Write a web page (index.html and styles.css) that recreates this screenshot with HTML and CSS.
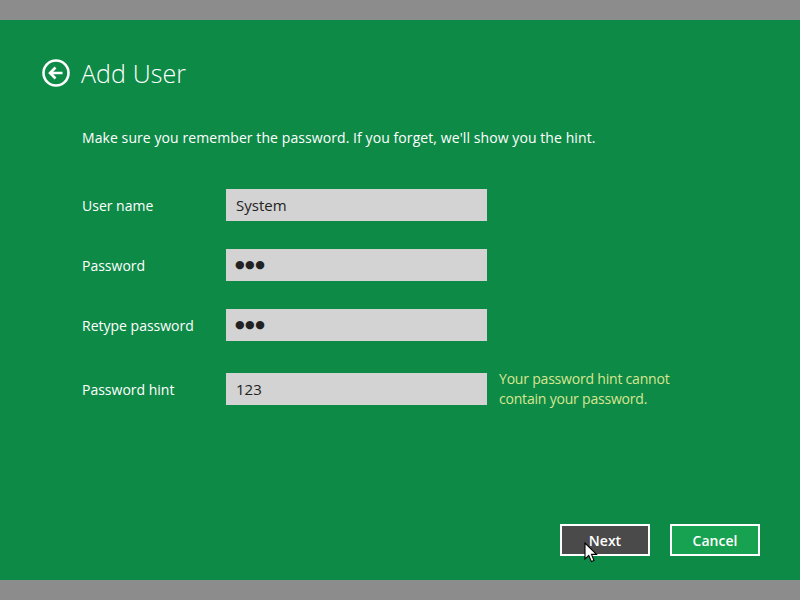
FILE: index.html
```html
<!DOCTYPE html>
<html>
<head>
<meta charset="utf-8">
<link rel="stylesheet" href="styles.css">
</head>
<body>
<div class="topbar"></div>
<main class="panel">
  <header class="title-row">
    <svg class="back" width="30" height="30" viewBox="0 0 30 30">
      <circle cx="15" cy="15" r="12.5" fill="none" stroke="#fff" stroke-width="2.6"/>
      <path d="M21.5 15 H9.5 M14.5 9.5 L9 15 L14.5 20.5" fill="none" stroke="#fff" stroke-width="2.6" stroke-linecap="butt" stroke-linejoin="miter"/>
    </svg>
    <h1 class="title">Add User</h1>
  </header>
  <p class="intro">Make sure you remember the password. If you forget, we'll show you the hint.</p>
  <div class="form">
    <div class="row">
      <label class="label">User name</label>
      <div class="field">System</div>
    </div>
    <div class="row">
      <label class="label">Password</label>
      <div class="field dots">●●●</div>
    </div>
    <div class="row">
      <label class="label">Retype password</label>
      <div class="field dots">●●●</div>
    </div>
    <div class="row row-hint">
      <label class="label">Password hint</label>
      <div class="field">123</div>
      <div class="error">Your password hint cannot<br>contain your password.</div>
    </div>
  </div>
  <div class="spacer"></div>
  <footer class="buttons">
    <button class="btn btn-next">Next</button>
    <button class="btn btn-cancel">Cancel</button>
    <svg class="cursor" width="14" height="22" viewBox="0 0 14 22">
      <path d="M1 1 L1 17 L4.8 13.4 L7.4 19.6 L10 18.5 L7.5 12.4 L12.5 12.4 Z" fill="#fff" stroke="#000" stroke-width="1.1" stroke-linejoin="miter"/>
    </svg>
  </footer>
</main>
<div class="bottombar"></div>
</body>
</html>
```
FILE: styles.css
```css
html, body {
  margin: 0;
  padding: 0;
  width: 800px;
  height: 600px;
  overflow: hidden;
  font-family: "Open Sans", "Noto Sans", sans-serif;
}
body {
  display: flex;
  flex-direction: column;
  background: #8c8c8c;
}
.topbar {
  height: 20px;
  background: #8c8c8c;
}
.bottombar {
  height: 20px;
  background: #8c8c8c;
}
.panel {
  height: 560px;
  background: #0e8a47;
  color: #fff;
  display: flex;
  flex-direction: column;
  padding: 0 40px 0 41px;
  box-sizing: border-box;
}
.title-row {
  display: flex;
  align-items: center;
  gap: 10px;
  margin-top: 38px;
  height: 30px;
}
.back {
  display: block;
}
.title {
  margin: 0;
  font-size: 25px;
  font-weight: 300;
  line-height: 30px;
  letter-spacing: 0.1px;
}
.intro {
  margin: 40px 0 0 41px;
  font-size: 14px;
  line-height: 20px;
  letter-spacing: 0.08px;
}
.form {
  margin: 41px 0 0 41px;
  display: flex;
  flex-direction: column;
  gap: 28px;
}
.row {
  display: flex;
  align-items: center;
  height: 32px;
}
.row-hint {
  margin-top: 4px;
}
.label {
  width: 144px;
  font-size: 14px;
}
.field {
  width: 261px;
  height: 32px;
  box-sizing: border-box;
  background: #d3d3d3;
  color: #222;
  font-size: 15px;
  line-height: 32px;
  padding-left: 10px;
}
.dots {
  font-family: "DejaVu Sans", sans-serif;
  font-size: 11px;
  letter-spacing: 0.5px;
  padding-left: 9px;
}
.error {
  margin-left: 12px;
  color: #d8e690;
  font-size: 14px;
  line-height: 20px;
  letter-spacing: -0.2px;
}
.spacer {
  flex: 1;
}
.buttons {
  position: relative;
  display: flex;
  justify-content: flex-end;
  gap: 20px;
  margin-bottom: 24px;
}
.btn {
  width: 90px;
  height: 32px;
  box-sizing: border-box;
  border: 2px solid #fff;
  color: #fff;
  font-family: inherit;
  font-size: 14px;
  font-weight: 600;
  padding: 0;
}
.btn-next {
  background: #4a4a4a;
}
.btn-cancel {
  background: #17a251;
}
.cursor {
  position: absolute;
  left: 543px;
  top: 18px;
}
```
